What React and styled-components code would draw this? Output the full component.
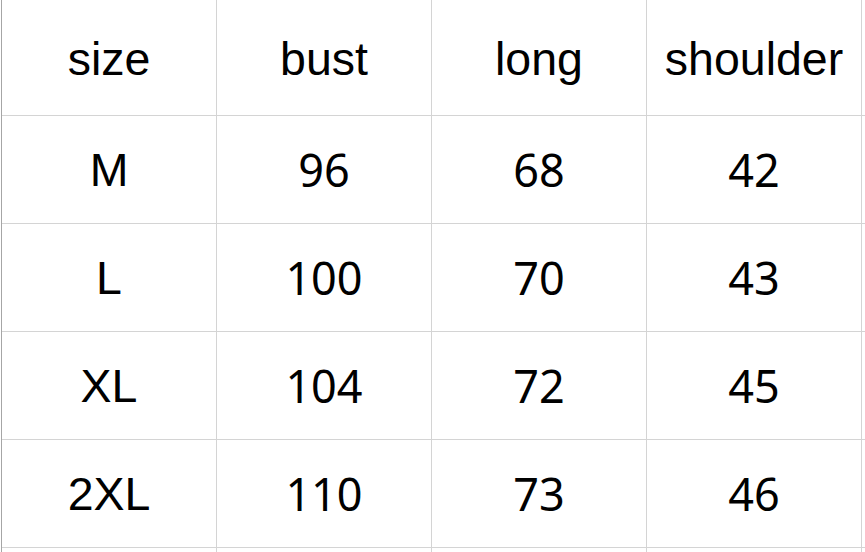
import React from "react";
import styled, { createGlobalStyle } from "styled-components";

const Global = createGlobalStyle`
  html, body { margin: 0; padding: 0; background: #ffffff; }
  body { width: 865px; height: 552px; overflow: hidden; }
`;

const Sheet = styled.div`
  margin-left: 1px;
  display: grid;
  grid-template-columns: repeat(4, 215px) 3px;
  grid-template-rows: 116px repeat(4, 108px) 5px;
  border-left: 1px solid #a6a6a6;
  width: max-content;
`;

const Cell = styled.div`
  display: flex;
  align-items: center;
  justify-content: center;
  border-right: 1px solid #d4d4d4;
  border-bottom: 1px solid #d4d4d4;
  color: #000;
  font-family: ${(p) =>
    p.$numeric
      ? '"Noto Sans", "Open Sans", sans-serif'
      : '"Liberation Sans", Arial, sans-serif'};
  font-size: ${(p) => (p.$numeric ? "45px" : "46.5px")};
  padding-top: ${(p) => (p.$header ? "3px" : "0")};
  box-sizing: border-box;
`;

const Edge = styled.div`
  border-bottom: 1px solid #d4d4d4;
`;

const Tail = styled.div`
  border-right: 1px solid #d4d4d4;
`;

const header = ["size", "bust", "long", "shoulder"];
const rows = [
  ["M", "96", "68", "42"],
  ["L", "100", "70", "43"],
  ["XL", "104", "72", "45"],
  ["2XL", "110", "73", "46"],
];

export default function App() {
  return (
    <>
      <Global />
      <Sheet>
        {header.map((h) => (
          <Cell key={h} $header>
            {h}
          </Cell>
        ))}
        <Edge />
        {rows.map((r) => (
          <React.Fragment key={r[0]}>
            {r.map((v, i) => (
              <Cell key={r[0] + i} $numeric={i > 0}>
                {v}
              </Cell>
            ))}
            <Edge />
          </React.Fragment>
        ))}
        {header.map((h) => (
          <Tail key={"t" + h} />
        ))}
      </Sheet>
    </>
  );
}
